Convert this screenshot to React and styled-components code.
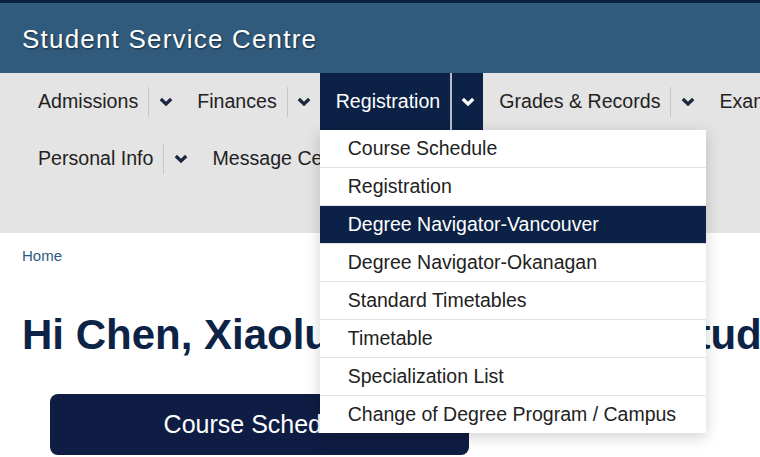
import React from "react";
import styled, { createGlobalStyle } from "styled-components";

const GlobalStyle = createGlobalStyle`
  html, body {
    margin: 0;
    padding: 0;
    background: #ffffff;
    overflow: hidden;
  }
  body {
    font-family: "Liberation Sans", Arial, Helvetica, sans-serif;
  }
`;

const menu = [
  { label: "Admissions" },
  { label: "Finances" },
  {
    label: "Registration",
    open: true,
    children: [
      "Course Schedule",
      "Registration",
      "Degree Navigator-Vancouver",
      "Degree Navigator-Okanagan",
      "Standard Timetables",
      "Timetable",
      "Specialization List",
      "Change of Degree Program / Campus",
    ],
    selected: 2,
  },
  { label: "Grades & Records" },
  { label: "Exams" },
  { label: "Personal Info" },
  { label: "Message Centre" },
];

function Chevron({ light }) {
  return (
    <svg width="14" height="10" viewBox="0 0 14 10">
      <path
        d="M1.8 2 L7 7 L12.2 2"
        fill="none"
        stroke={light ? "#ffffff" : "#1c2740"}
        strokeWidth="3.2"
        strokeLinejoin="miter"
      />
    </svg>
  );
}

export default function App() {
  return (
    <Page>
      <GlobalStyle />
      <TopStrip />
      <Masthead>
        <SiteTitle>Student Service Centre</SiteTitle>
      </Masthead>
      <NavBar>
        <NavList>
          {menu.map((item) => (
            <NavItem key={item.label} $active={item.open}>
              <NavLabel>{item.label}</NavLabel>
              <Divider $active={item.open} />
              <Toggle>
                <Chevron light={item.open} />
              </Toggle>
              {item.open && (
                <Dropdown>
                  {item.children.map((child, i) => (
                    <DropItem key={child} $selected={i === item.selected}>
                      {child}
                    </DropItem>
                  ))}
                </Dropdown>
              )}
            </NavItem>
          ))}
        </NavList>
      </NavBar>
      <Main>
        <Breadcrumb href="#">Home</Breadcrumb>
        <Greeting>Hi Chen, Xiaolu, welcome to the Student Service Centre</Greeting>
        <PrimaryButton>Course Schedule</PrimaryButton>
      </Main>
    </Page>
  );
}

const Page = styled.div`
  width: 100%;
  min-height: 457px;
  background: #ffffff;
`;

const TopStrip = styled.div`
  height: 3px;
  background: #0a2240;
`;

const Masthead = styled.header`
  height: 70px;
  display: flex;
  align-items: center;
  padding: 3px 0 0 22px;
  box-sizing: border-box;
  background: #305b7d;
`;

const SiteTitle = styled.h1`
  margin: 0;
  font-size: 26px;
  font-weight: 400;
  letter-spacing: 1.2px;
  color: #ffffff;
  text-shadow: 1px 1px 2px rgba(0, 0, 0, 0.55);
`;

const NavBar = styled.nav`
  background: #e4e4e4;
  padding: 0 0 46px 22px;
`;

const NavList = styled.div`
  width: 900px;
  display: flex;
  flex-wrap: wrap;
`;

const NavItem = styled.div`
  position: relative;
  display: flex;
  align-items: center;
  height: 57px;
  background: ${(p) => (p.$active ? "#0b2246" : "transparent")};
  color: ${(p) => (p.$active ? "#ffffff" : "#222222")};
`;

const NavLabel = styled.span`
  padding: 0 10px 0 16px;
  font-size: 19.6px;
  white-space: nowrap;
`;

const Divider = styled.span`
  width: ${(p) => (p.$active ? "2px" : "1px")};
  height: ${(p) => (p.$active ? "57px" : "30px")};
  margin-right: ${(p) => (p.$active ? "0" : "1px")};
  background: ${(p) => (p.$active ? "#b9bcc4" : "#c6c6c6")};
`;

const Toggle = styled.span`
  width: 31px;
  display: flex;
  justify-content: center;
  align-items: center;
`;

const Dropdown = styled.div`
  position: absolute;
  top: 57px;
  left: 0;
  width: 386px;
  background: #ffffff;
  box-shadow: 0 4px 14px rgba(0, 0, 0, 0.18);
  z-index: 10;
`;

const DropItem = styled.div`
  height: 37px;
  display: flex;
  align-items: center;
  padding-left: 28px;
  font-size: 19.5px;
  white-space: nowrap;
  color: ${(p) => (p.$selected ? "#ffffff" : "#222222")};
  background: ${(p) => (p.$selected ? "#0b2246" : "#ffffff")};
  & + & {
    border-top: 1px solid #e3e3e3;
  }
`;

const Main = styled.main`
  padding: 14px 22px 0;
`;

const Breadcrumb = styled.a`
  display: block;
  font-size: 15px;
  line-height: 18px;
  color: #2b5a80;
  text-decoration: none;
`;

const Greeting = styled.h2`
  margin: 45px 0 0;
  font-size: 42px;
  line-height: 50px;
  font-weight: 700;
  color: #0c2346;
  white-space: nowrap;
`;

const PrimaryButton = styled.button`
  margin: 34px 0 0 28px;
  width: 419px;
  height: 61px;
  border: none;
  border-radius: 8px;
  background: #0f1d44;
  color: #ffffff;
  font-family: "Liberation Sans", Arial, sans-serif;
  font-size: 25px;
`;
